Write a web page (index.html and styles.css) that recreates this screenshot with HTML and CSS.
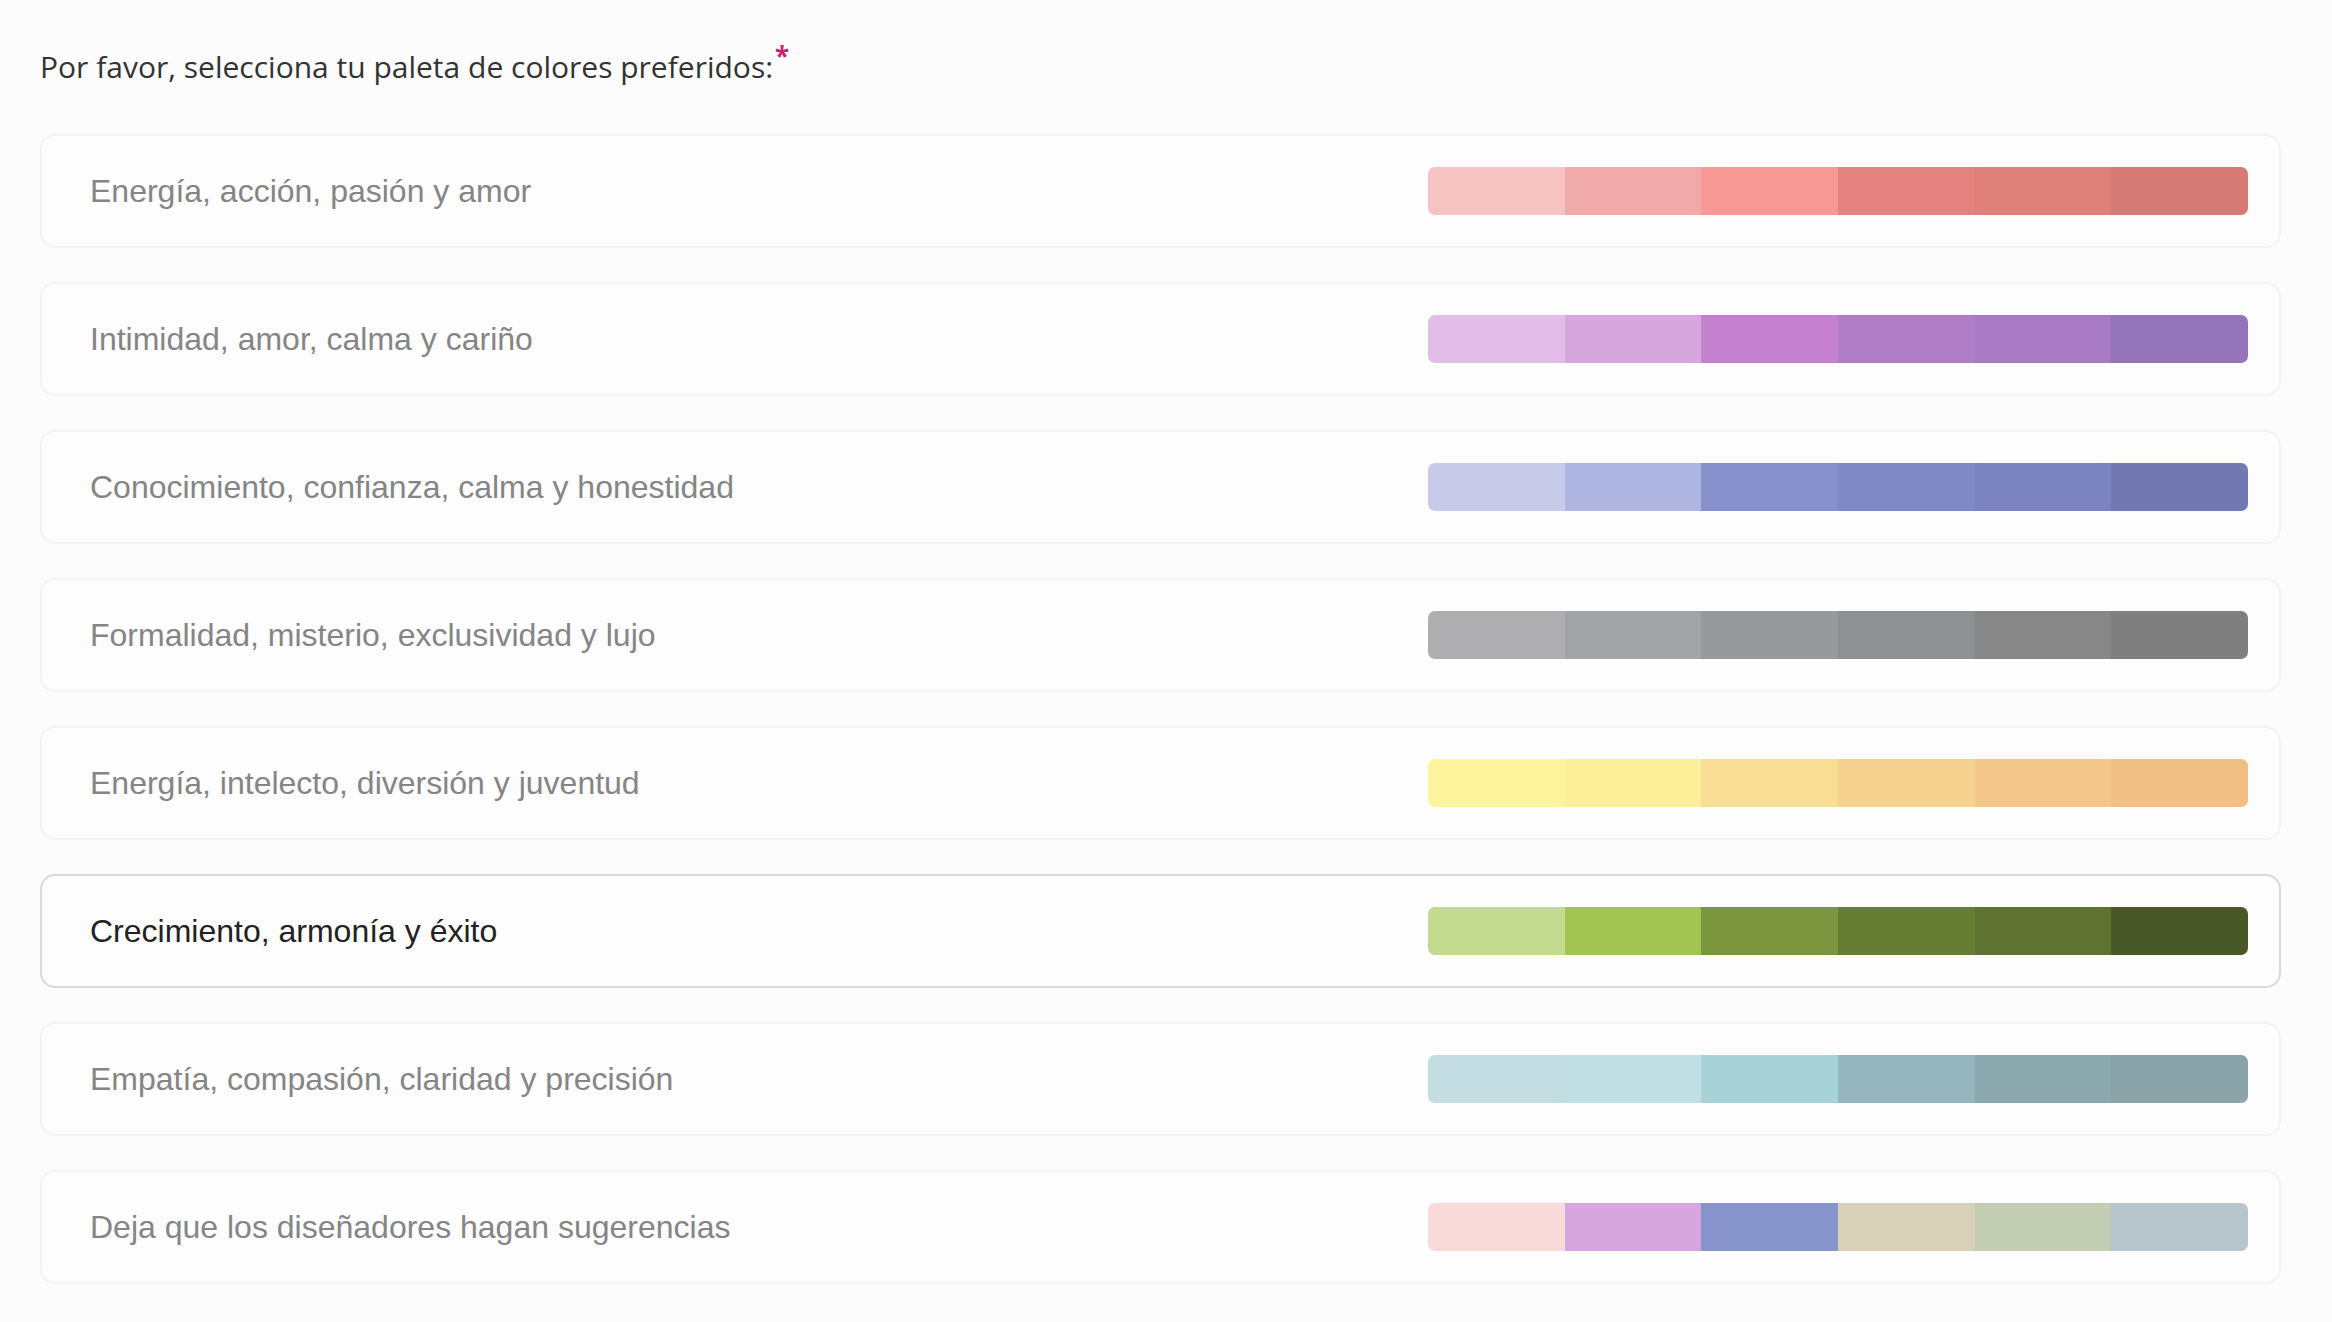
FILE: index.html
```html
<!DOCTYPE html>
<html lang="es">
<head>
<meta charset="utf-8">
<title>Paleta de colores</title>
<link rel="stylesheet" href="styles.css">
</head>
<body>
<main class="page">
  <h2 class="question">Por favor, selecciona tu paleta de colores preferidos:<span class="req">*</span></h2>
  <div class="options">
    <label class="option">
      <span class="label">Energía, acción, pasión y amor</span>
      <span class="palette">
        <i style="background:#f4c3c2"></i><i style="background:#efaaa9"></i><i style="background:#f79894"></i><i style="background:#e3827f"></i><i style="background:#e0807b"></i><i style="background:#d57a75"></i>
      </span>
    </label>
    <label class="option">
      <span class="label">Intimidad, amor, calma y cariño</span>
      <span class="palette">
        <i style="background:#e2bde8"></i><i style="background:#d7a6df"></i><i style="background:#c581cf"></i><i style="background:#b07ec7"></i><i style="background:#a97ac4"></i><i style="background:#9474b9"></i>
      </span>
    </label>
    <label class="option">
      <span class="label">Conocimiento, confianza, calma y honestidad</span>
      <span class="palette">
        <i style="background:#c7cae8"></i><i style="background:#aeb5e0"></i><i style="background:#8690cb"></i><i style="background:#7f89c3"></i><i style="background:#7b84c0"></i><i style="background:#7278b1"></i>
      </span>
    </label>
    <label class="option">
      <span class="label">Formalidad, misterio, exclusividad y lujo</span>
      <span class="palette">
        <i style="background:#aeaeb1"></i><i style="background:#a3a4a8"></i><i style="background:#98999d"></i><i style="background:#8f9093"></i><i style="background:#878787"></i><i style="background:#7f7f80"></i>
      </span>
    </label>
    <label class="option">
      <span class="label">Energía, intelecto, diversión y juventud</span>
      <span class="palette">
        <i style="background:#fdf59d"></i><i style="background:#fbef97"></i><i style="background:#f8dd94"></i><i style="background:#f6d290"></i><i style="background:#f3c689"></i><i style="background:#f1bf83"></i>
      </span>
    </label>
    <label class="option selected">
      <span class="label">Crecimiento, armonía y éxito</span>
      <span class="palette">
        <i style="background:#c3da8f"></i><i style="background:#a1c452"></i><i style="background:#7c963f"></i><i style="background:#667d34"></i><i style="background:#5f7232"></i><i style="background:#485828"></i>
      </span>
    </label>
    <label class="option">
      <span class="label">Empatía, compasión, claridad y precisión</span>
      <span class="palette">
        <i style="background:#c4dde2"></i><i style="background:#c1e0e5"></i><i style="background:#a7d2d8"></i><i style="background:#96b6bd"></i><i style="background:#8ba8ae"></i><i style="background:#8ba4aa"></i>
      </span>
    </label>
    <label class="option">
      <span class="label">Deja que los diseñadores hagan sugerencias</span>
      <span class="palette">
        <i style="background:#f8dad9"></i><i style="background:#d7a6df"></i><i style="background:#8794cb"></i><i style="background:#d8d0b9"></i><i style="background:#c3cdb3"></i><i style="background:#b7c6cd"></i>
      </span>
    </label>
  </div>
</main>
</body>
</html>
```

FILE: styles.css
```css
* {
  box-sizing: border-box;
}

html, body {
  margin: 0;
  padding: 0;
  background: #fcfcfc;
}

.page {
  padding: 46px 51px 0 40px;
  display: flex;
  flex-direction: column;
}

.question {
  margin: 0;
  font-family: "Open Sans", "Noto Sans", sans-serif;
  font-weight: 400;
  font-size: 30px;
  line-height: 42px;
  color: #333333;
}

.req {
  color: #cc1f6e;
  font-size: 26px;
  font-weight: 700;
  vertical-align: 12px;
  line-height: 0;
  margin-left: 2px;
}

.options {
  margin-top: 46px;
  display: flex;
  flex-direction: column;
  gap: 34px;
}

.option {
  height: 114px;
  display: flex;
  align-items: center;
  justify-content: space-between;
  padding: 0 31px 0 48px;
  background: #fdfdfd;
  border: 2px solid #f3f3f3;
  border-radius: 15px;
  cursor: pointer;
}

.option.selected {
  border-color: #d9d9d9;
}

.label {
  font-family: "Liberation Sans", Arial, sans-serif;
  font-size: 32px;
  color: #858585;
}

.selected .label {
  color: #222222;
}

.palette {
  width: 820px;
  height: 48px;
  display: flex;
  border-radius: 7px;
  overflow: hidden;
}

.palette i {
  flex: 1 1 0;
  display: block;
}
```
